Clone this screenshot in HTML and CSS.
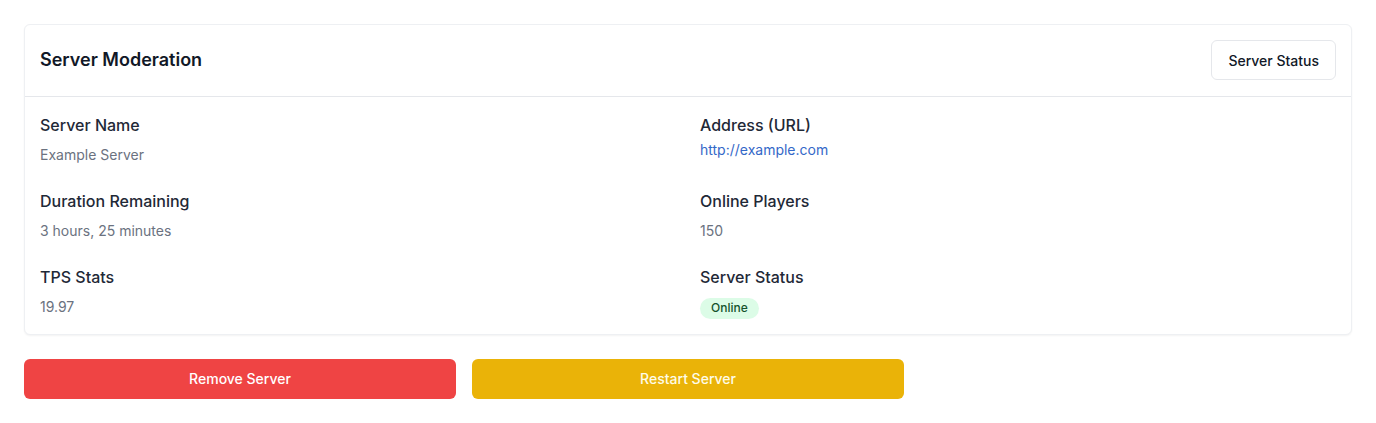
FILE: index.html
```html
<!DOCTYPE html>
<html lang="en">
<head>
<meta charset="utf-8">
<title>Server Moderation</title>
<link rel="stylesheet" href="styles.css">
</head>
<body>
<main class="page">
  <section class="card">
    <header class="card-header">
      <h2 class="card-title">Server Moderation</h2>
      <button class="btn-outline" type="button">Server Status</button>
    </header>
    <div class="card-body">
      <div class="field">
        <div class="label">Server Name</div>
        <div class="value">Example Server</div>
      </div>
      <div class="field">
        <div class="label">Address (URL)</div>
        <a class="link" href="#">http://example.com</a>
      </div>
      <div class="field">
        <div class="label">Duration Remaining</div>
        <div class="value">3 hours, 25 minutes</div>
      </div>
      <div class="field">
        <div class="label">Online Players</div>
        <div class="value">150</div>
      </div>
      <div class="field">
        <div class="label">TPS Stats</div>
        <div class="value">19.97</div>
      </div>
      <div class="field">
        <div class="label">Server Status</div>
        <div class="value"><span class="badge">Online</span></div>
      </div>
    </div>
  </section>
  <div class="actions">
    <button class="btn btn-red" type="button">Remove Server</button>
    <button class="btn btn-yellow" type="button">Restart Server</button>
  </div>
</main>
</body>
</html>
```
FILE: styles.css
```css
* { box-sizing: border-box; }
html, body { margin: 0; padding: 0; background: #ffffff; }
body {
  font-family: Inter, "Noto Sans", "Liberation Sans", sans-serif;
  color: #111827;
  -webkit-font-smoothing: antialiased;
}
.page { padding: 24px; }
.card {
  border: 1px solid #eef0f3;
  border-radius: 6px;
  background: #fff;
  box-shadow: 0 1px 2px rgba(0,0,0,0.05);
}
.card-header {
  display: flex;
  align-items: center;
  justify-content: space-between;
  padding: 15px 15px 16px 15px;
  border-bottom: 1px solid #e5e7eb;
}
.card-title {
  margin: 0;
  font-size: 18px;
  line-height: 28px;
  font-weight: 600;
  color: #111827;
}
.btn-outline {
  height: 40px;
  padding: 0 16px;
  border: 1px solid #e5e7eb;
  border-radius: 6px;
  background: #fff;
  font-family: inherit;
  font-size: 14px;
  font-weight: 500;
  color: #111827;
}
.card-body {
  display: grid;
  grid-template-columns: 1fr 1fr;
  column-gap: 24px;
  row-gap: 24px;
  padding: 16px 15px 15px 15px;
}
.field { display: flex; flex-direction: column; align-items: flex-start; }
.label {
  font-size: 16px;
  line-height: 24px;
  font-weight: 500;
  color: #1f2937;
}
.value {
  margin-top: 8px;
  font-size: 14px;
  line-height: 20px;
  color: #6b7280;
}
.link {
  margin-top: 3px;
  font-size: 14px;
  line-height: 20px;
  color: #3468c8;
  text-decoration: none;
}
.badge {
  display: inline-flex;
  align-items: center;
  height: 21px;
  padding: 0 11px;
  border-radius: 9999px;
  background: #dcfce7;
  color: #14532d;
  font-size: 12px;
  font-weight: 500;
  line-height: 16px;
}
.actions {
  display: grid;
  grid-template-columns: repeat(3, 1fr);
  gap: 16px;
  margin-top: 24px;
}
.btn {
  height: 40px;
  border: 0;
  border-radius: 6px;
  font-family: inherit;
  font-size: 14px;
  font-weight: 500;
  color: #ffffff;
}
.btn-red { background: #ef4444; }
.btn-yellow { background: #eab308; color: #fefce8; }
```
